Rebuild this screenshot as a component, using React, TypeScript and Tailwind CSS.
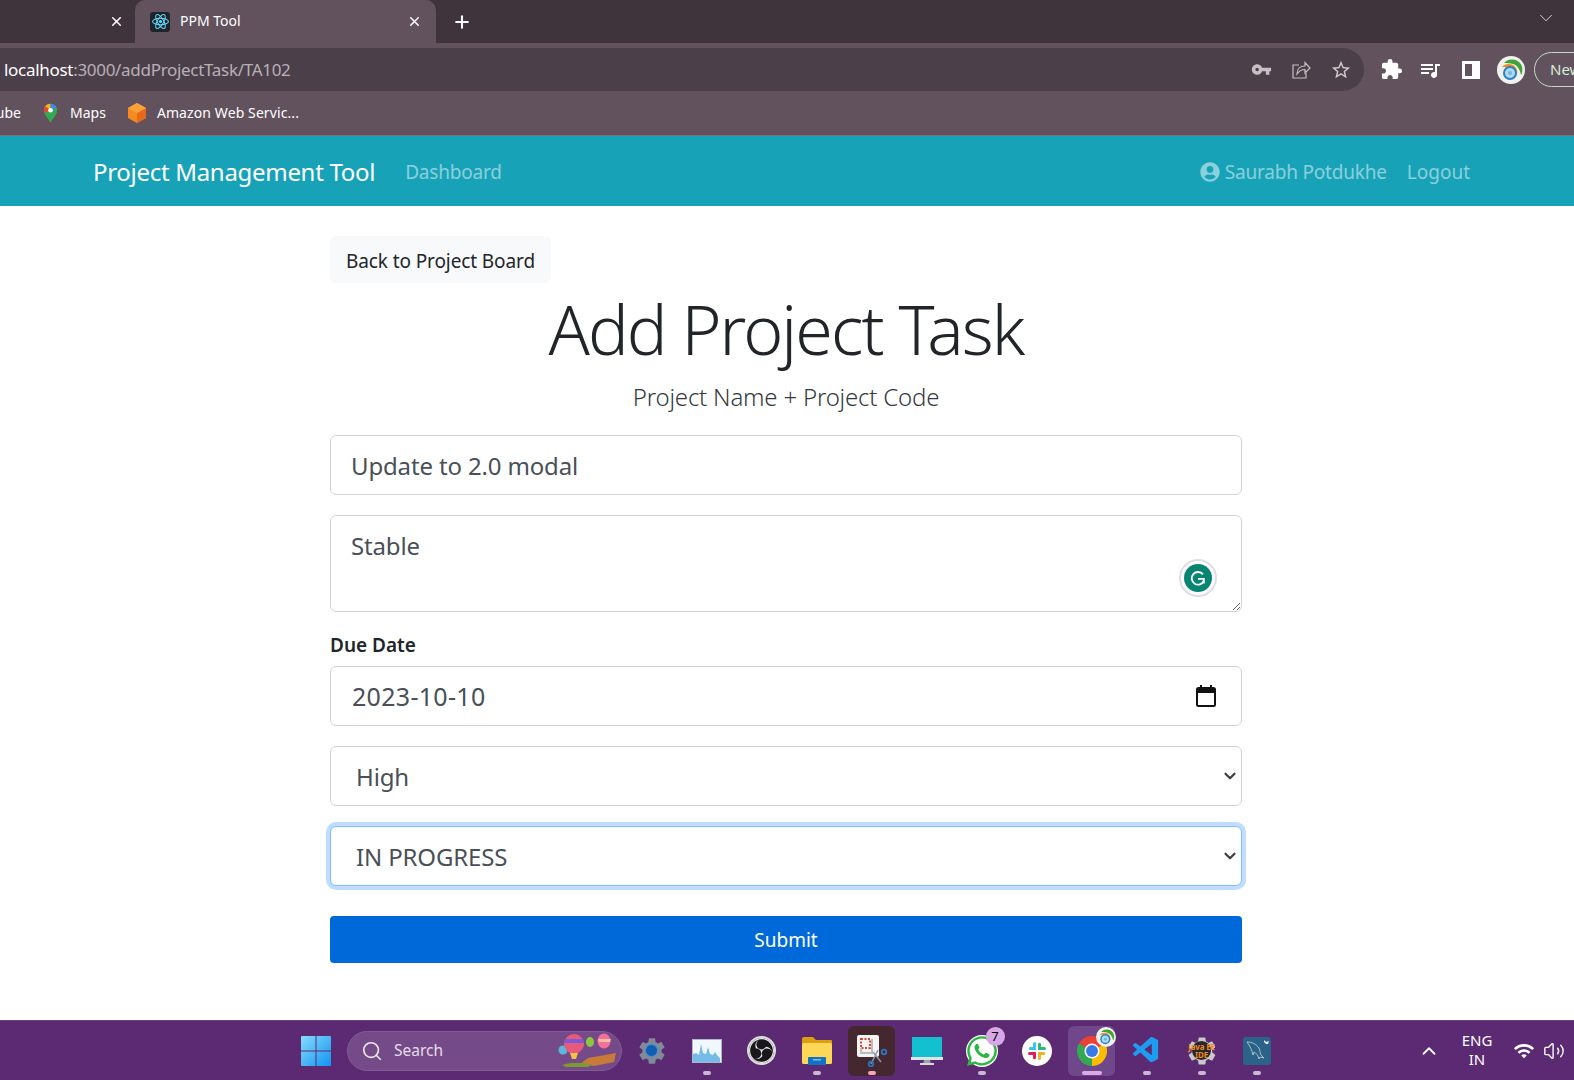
import { ChevronDown, ChevronUp, Plus, Search, Volume2, X } from 'lucide-react';
import { FaUserCircle, FaWhatsapp } from 'react-icons/fa';
import { MdExtension, MdOutlineStarBorder, MdQueueMusic, MdSettings, MdVpnKey, MdWifi } from 'react-icons/md';
import { SiObsstudio } from 'react-icons/si';
import { VscVscode } from 'react-icons/vsc';

function ReactFavicon() {
  return (
    <div className="w-[20px] h-[20px] rounded-[3px] bg-[#20232a] flex items-center justify-center">
      <svg viewBox="0 0 24 24" className="w-[19px] h-[19px]" fill="none" stroke="#61dafb" strokeWidth="1.3">
        <circle cx="12" cy="12" r="2" fill="#61dafb" stroke="none" />
        <ellipse cx="12" cy="12" rx="10" ry="4" />
        <ellipse cx="12" cy="12" rx="10" ry="4" transform="rotate(60 12 12)" />
        <ellipse cx="12" cy="12" rx="10" ry="4" transform="rotate(120 12 12)" />
      </svg>
    </div>
  );
}

function MapsPin() {
  return (
    <svg viewBox="0 0 16 22" className="w-[15px] h-[21px]">
      <path d="M8 21C6 16 1 13 1 7.5a7 7 0 0 1 14 0C15 13 10 16 8 21z" fill="#34a853" />
      <path d="M2 3.5A7 7 0 0 1 8 .5v4L4.500 9 1.500 8z" fill="#fbbc04" />
      <path d="M8 .5a7 7 0 0 1 6.500 4.500L8 7z" fill="#4285f4" />
      <path d="M2.500 3.200 8 7 3 10.500C1.500 9 1 8 1 7c0-1.300.6-2.700 1.500-3.800z" fill="#ea4335" />
      <circle cx="8" cy="7.500" r="2.500" fill="#fff" />
    </svg>
  );
}

function AwsCube() {
  return (
    <svg viewBox="0 0 20 22" className="w-[20px] h-[22px]">
      <path d="M10 1l9 5v10l-9 5-9-5V6z" fill="#f58a1f" />
      <path d="M10 11l9-5v10l-9 5z" fill="#e8681c" />
      <path d="M10 1l9 5-9 5-9-5z" fill="#f9a23c" />
    </svg>
  );
}

function ProfileLogo({ size }: { size: string }) {
  return (
    <svg viewBox="0 0 28 28" className={size}>
      <circle cx="14" cy="14" r="14" fill="#f1f1ee" />
      <path d="M7 7a11 11 0 0 1 16 0c3 3 3 9 1 12-1-6-4-10-8-11-3-1-6-1-9-1z" fill="#3fa535" />
      <path d="M5 11c2-3 7-4 11-2 3 2 5 5 4 10-1-4-3-6-6-7-3-1-6-1-9-1z" fill="#f08a24" />
      <circle cx="13" cy="17" r="7" fill="#2f7fc1" />
      <circle cx="13" cy="17" r="5" fill="#a8dcf2" />
      <circle cx="13" cy="17" r="2" fill="#6bb8e0" />
    </svg>
  );
}

function BrowserChrome() {
  return (
    <div className="shrink-0 bg-[#62525d] text-white">
      {/* tab strip */}
      <div className="h-[43px] bg-[#3f333c] flex items-start relative">
        <div className="w-[135px] h-[43px] flex items-center justify-end pr-[11px]">
          <X className="w-[15px] h-[15px]" strokeWidth={2.5} />
        </div>
        <div className="w-[301px] h-[43px] rounded-t-[10px] bg-[#62525d] flex items-center pl-[15px] pr-[14px]">
          <ReactFavicon />
          <span className="ml-[10px] mb-[2px] text-[14px] flex-1">PPM Tool</span>
          <X className="w-[15px] h-[15px]" strokeWidth={2.5} />
        </div>
        <div className="ml-[16px] h-[43px] flex items-center">
          <Plus className="w-[20px] h-[20px]" strokeWidth={2.5} />
        </div>
        <ChevronDown className="absolute right-[17px] top-[7px] w-[22px] h-[22px] text-[#e5dde3]" strokeWidth={1} />
      </div>
      {/* address row */}
      <div className="h-[48px] flex items-start pt-[5px]">
        <div className="w-[1364px] shrink-0 h-[43px] bg-[#4b3f4a] rounded-r-[22px] flex items-center pl-[4px] pr-[12px]">
          <span className="text-[17px] flex-1 tracking-[-0.3px] text-[#b9b0b7]">
            <span className="text-white">localhost</span>:3000/addProjectTask/TA102
          </span>
          <MdVpnKey className="w-[21px] h-[21px] text-[#c6c0c4]" />
          <svg viewBox="0 0 20 20" className="ml-[19px] w-[20px] h-[20px]" fill="none" stroke="#c6c0c4" strokeWidth="1.200">
            <path d="M8 5H2v13h13v-5" />
            <path d="M6 14c0-5 3-8 8-8V2.500L19 8l-5 5V9.500c-4 0-6 1.500-8 4.500z" />
          </svg>
          <MdOutlineStarBorder className="ml-[19px] w-[22px] h-[22px] text-[#d0cacd]" />
        </div>
        <div className="flex items-center shrink-0 h-[43px] ml-[16px]">
          <MdExtension className="w-[23px] h-[23px]" />
          <MdQueueMusic className="ml-[15px] w-[24px] h-[24px]" />
          <div className="ml-[20px] w-[18px] h-[18px] border-[3px] border-white border-r-[8px]" />
          <div className="ml-[17px]"><ProfileLogo size="w-[28px] h-[28px]" /></div>
          <div className="ml-[9px] h-[35px] w-[60px] shrink-0 rounded-l-[18px] border border-[#c5d8c5] pl-[15px] flex items-center text-[15px] text-[#d5ecd5] overflow-hidden">New</div>
        </div>
      </div>
      {/* bookmarks */}
      <div className="h-[44px] flex items-center text-[14px] overflow-hidden">
        <span className="w-[21px] mb-[2px] overflow-hidden flex justify-end">ube</span>
        <div className="ml-[22px]"><MapsPin /></div>
        <span className="ml-[12px] mb-[2px]">Maps</span>
        <div className="ml-[21px]"><AwsCube /></div>
        <span className="ml-[10px] mb-[2px] tracking-[0.1px]">Amazon Web Servic...</span>
      </div>
    </div>
  );
}

function NavBar() {
  return (
    <nav className="h-[71px] shrink-0 bg-[#17a2b8] flex items-center pl-[93px] pr-[104px] pt-[1px] border-t border-[#7d7079]">
      <span className="text-[24px] text-white tracking-[-0.3px]">Project Management Tool</span>
      <a className="ml-[30px] pt-[2px] text-[19px] text-white/50 tracking-[-0.2px]">Dashboard</a>
      <div className="flex-1" />
      <FaUserCircle className="w-[20px] h-[20px] text-white/50" />
      <a className="ml-[5px] pt-[2px] text-[19px] text-white/50 tracking-[-0.2px]">Saurabh Potdukhe</a>
      <a className="ml-[20px] pt-[2px] text-[19px] text-white/50">Logout</a>
    </nav>
  );
}

function DueDate() {
  return (
    <div className="h-[60px] border border-[#ced4da] rounded-[6px] flex items-center pl-[21px] pr-[25px] text-[25px] text-[#495057] tracking-[0.3px]">
      <span className="flex-1 pt-[2px]">2023-10-10</span>
      <svg viewBox="0 0 20 22" className="w-[20px] h-[22px]" fill="none" stroke="#111" strokeWidth="2">
        <rect x="1" y="3" width="18" height="18" rx="1.500" />
        <path d="M1 6h18" strokeWidth="4" />
        <path d="M5 0v3M15 0v3" />
      </svg>
    </div>
  );
}

function SelectField({ value, focused }: { value: string; focused?: boolean }) {
  return (
    <div className="relative mt-[20px]">
      <select
        className={
          focused
            ? 'block w-full appearance-none h-[60px] border border-[#80bdff] rounded-[6px] pl-[25px] pt-[2px] text-[24px] tracking-[-0.15px] text-[#495057] bg-white outline-none shadow-[0_0_0_4px_rgba(0,123,255,0.25)]'
            : 'block w-full appearance-none h-[60px] border border-[#ced4da] rounded-[6px] pl-[25px] pt-[2px] text-[24px] tracking-[-0.15px] text-[#495057] bg-white outline-none'
        }
      >
        <option>{value}</option>
      </select>
      <ChevronDown className="absolute right-[3px] top-[21px] w-[18px] h-[18px] text-[#3c4043]" strokeWidth={3} />
    </div>
  );
}

function ProjectTaskForm() {
  return (
    <main className="flex-1 overflow-hidden bg-white text-[#212529]">
      <div className="w-[912px] ml-[330px] pt-[30px]">
        <a className="inline-flex h-[47px] w-[221px] pt-[3px] items-center justify-center rounded-[6px] bg-[#f8f9fa] text-[19px] tracking-[-0.1px]">Back to Project Board</a>
        <h4 className="mt-[4px] h-[84px] leading-[84px] text-center text-[68px] font-light tracking-[-1.9px]">Add Project Task</h4>
        <p className="mt-[7px] h-[37px] leading-[38px] text-center text-[24px] font-light tracking-[-0.2px] text-[#343a40]">Project Name + Project Code</p>
        <div className="mt-[20px] flex flex-col">
          <input
            readOnly
            value="Update to 2.0 modal"
            className="h-[60px] border border-[#ced4da] rounded-[6px] px-[20px] text-[24px] tracking-[-0.15px] text-[#495057] outline-none"
          />
          <div className="relative mt-[20px] h-[97px]">
            <textarea
              readOnly
              value="Stable"
              className="block w-full h-[97px] border border-[#ced4da] rounded-[6px] px-[20px] py-[11px] text-[24px] tracking-[-0.15px] leading-[37px] text-[#495057] outline-none"
            />
            <div className="absolute right-[25px] top-[44px] w-[38px] h-[38px] rounded-full border-2 border-[#dcdfe8] bg-white flex items-center justify-center">
              <div className="w-[28px] h-[28px] rounded-full bg-[#078572] flex items-center justify-center">
                <svg viewBox="0 0 20 20" className="w-[18px] h-[18px]" fill="none" stroke="#fff" strokeWidth="2">
                  <path d="M15.500 6A7 7 0 1 0 16.500 13" />
                  <path d="M10 11h6.500v5" />
                </svg>
              </div>
            </div>
          </div>
          <label className="mt-[20px] h-[34px] leading-[26px] text-[19px] font-semibold">Due Date</label>
          <DueDate />
          <SelectField value="High" />
          <SelectField value="IN PROGRESS" focused />
          <button className="mt-[30px] h-[47px] pt-[2px] rounded-[4px] bg-[#0069d9] text-white text-[19px]">Submit</button>
        </div>
      </div>
    </main>
  );
}

function TaskIcon({ children, dot, active }: { children: React.ReactNode; dot?: string; active?: string }) {
  return (
    <div className="relative w-[55px] h-[50px] flex items-center justify-center">
      {active && <div className={`absolute inset-y-0 inset-x-[4px] rounded-[6px] ${active}`} />}
      <div className="relative">{children}</div>
      {dot && <div className={`absolute bottom-[1px] left-1/2 -translate-x-1/2 h-[4px] rounded-full ${dot}`} />}
    </div>
  );
}

function Taskbar() {
  return (
    <footer className="h-[60px] shrink-0 bg-[#5b2a72] border-t border-[#6d4283] relative flex items-center text-white">
      <svg viewBox="0 0 30 30" className="ml-[301px] w-[30px] h-[30px]">
        <defs>
          <linearGradient id="win" x1="0" y1="0" x2="1" y2="1">
            <stop offset="0" stopColor="#86dcfd" />
            <stop offset="1" stopColor="#1293f0" />
          </linearGradient>
        </defs>
        <path d="M0 1a1 1 0 0 1 1-1h13.500v14.500H0zM15.500 0H29a1 1 0 0 1 1 1v13.500H15.500zM0 15.500h14.500V30H1a1 1 0 0 1-1-1zM15.500 15.500H30V29a1 1 0 0 1-1 1H15.500z" fill="url(#win)" />
      </svg>
      <div className="ml-[16px] w-[275px] h-[40px] rounded-full bg-[#754a88] border border-[#835b95] flex items-center pl-[13px] pr-[3px]">
        <Search className="w-[22px] h-[22px] text-[#efe8f2]" strokeWidth={1.800} />
        <span className="ml-[11px] text-[15.5px] text-[#e6dcea] flex-1">Search</span>
        <svg viewBox="0 0 60 36" className="w-[60px] h-[36px]">
          <path d="M22 31l8-6 28-5-2 9-20 4z" fill="#c87a3a" />
          <path d="M4 32c8-3 20-2 30-1l-4 3H8z" fill="#7d9a2e" />
          <circle cx="5" cy="17" r="4.500" fill="#58b8e0" />
          <path d="M6 11a10 10 0 0 1 20 0c0 4-3 7-6 9h-8c-3-2-6-5-6-9z" fill="#e85a7a" />
          <path d="M7 6h18l1 4H6z" fill="#7a5ad8" />
          <path d="M12 20h8l-2 6h-4z" fill="#f5c142" />
          <ellipse cx="32" cy="9" rx="4" ry="5" fill="#8ec63f" />
          <ellipse cx="46" cy="8" rx="6.500" ry="7.500" fill="#f2709c" />
          <path d="M40 6h13l-1 3H41z" fill="#f9c0a0" />
        </svg>
      </div>
      <div className="ml-[2px] flex items-center">
        <TaskIcon>
          <div className="relative w-[32px] h-[32px] flex items-center justify-center">
            <MdSettings className="w-[38px] h-[38px] text-[#7f8b99]" />
            <div className="absolute w-[13px] h-[13px] rounded-full bg-[#0f5fb5] border border-[#4d8fd4]" />
          </div>
        </TaskIcon>
        <TaskIcon dot="w-[8px] bg-[#c9b8d2]">
          <svg viewBox="0 0 30 24" className="w-[30px] h-[24px]">
            <rect width="30" height="24" fill="#a9b9c6" />
            <rect x="1" y="1" width="28" height="22" fill="#f1f8fd" />
            <path d="M1 23V15l3-1 3 2 2-11 2 9 3 1 2-7 2 7 3 1 2-3 2 3 3 3v4z" fill="#74bbe8" />
          </svg>
        </TaskIcon>
        <TaskIcon>
          <div className="w-[29px] h-[29px] rounded-full bg-[#19171c] border-2 border-[#dcdcdc] flex items-center justify-center">
            <SiObsstudio className="w-[25px] h-[25px] text-[#e8e8e8]" />
          </div>
        </TaskIcon>
        <TaskIcon dot="w-[8px] bg-[#c9b8d2]">
          <svg viewBox="0 0 30 28" className="w-[30px] h-[28px]">
            <path d="M0 2a2 2 0 0 1 2-2h9l3 3h15a1 1 0 0 1 1 1v3H0z" fill="#dd9f0d" />
            <rect x="0" y="6" width="30" height="21" rx="1.500" fill="#fdd858" />
            <rect x="6" y="20" width="18" height="8" rx="1" fill="#1272c4" />
            <rect x="11" y="22" width="8" height="1.500" fill="#fff" opacity="0.500" />
          </svg>
        </TaskIcon>
        <TaskIcon dot="w-[8px] bg-[#f0a6b8]" active="bg-[#45282f]">
          <svg viewBox="0 0 32 32" className="w-[32px] h-[32px]">
            <rect x="1" y="0" width="22" height="22" rx="2" fill="#f4f4f4" />
            <rect x="5" y="4" width="9" height="9" fill="none" stroke="#d9452e" strokeWidth="2" strokeDasharray="2 1.500" />
            <path d="M5 13v5h11V4" fill="none" stroke="#bdbdbd" strokeWidth="2" />
            <path d="M15 29L22 15M17 17l8 10" stroke="#8a9aa8" strokeWidth="1.500" fill="none" />
            <circle cx="15" cy="29" r="2.300" fill="none" stroke="#2a78c5" strokeWidth="1.700" />
            <circle cx="28" cy="17" r="2.300" fill="none" stroke="#2a78c5" strokeWidth="1.700" />
          </svg>
        </TaskIcon>
        <TaskIcon>
          <svg viewBox="0 0 32 30" className="w-[32px] h-[30px]">
            <rect x="1" y="1" width="30" height="20" fill="#12c0d0" />
            <rect x="0" y="21" width="32" height="3" fill="#e2e2e2" />
            <path d="M13 24h6l1 4h-8z" fill="#9aa3a8" />
            <rect x="9" y="27" width="14" height="2" fill="#d8d8d8" />
          </svg>
        </TaskIcon>
        <TaskIcon dot="w-[8px] bg-[#c9b8d2]">
          <div className="relative w-[32px] h-[32px] rounded-full bg-white flex items-center justify-center">
            <FaWhatsapp className="w-[34px] h-[34px] text-[#2bb741]" />
            <div className="absolute -top-[8px] -right-[7px] w-[19px] h-[19px] rounded-full bg-[#d8a8e6] text-black text-[13px] leading-[19px] text-center">7</div>
          </div>
        </TaskIcon>
        <TaskIcon>
          <div className="w-[30px] h-[30px] rounded-full bg-white flex items-center justify-center">
            <svg viewBox="0 0 24 24" className="w-[20px] h-[20px]" strokeWidth="3.600" strokeLinecap="round" fill="none">
              <path d="M9 3v6H4" stroke="#36c5f0" />
              <path d="M21 9h-6V4" stroke="#2eb67d" />
              <path d="M15 21v-6h5" stroke="#ecb22e" />
              <path d="M3 15h6v5" stroke="#e01e5a" />
            </svg>
          </div>
        </TaskIcon>
        <TaskIcon dot="w-[20px] bg-[#dba9e8]" active="bg-[#70478a]">
          <div className="relative w-[30px] h-[30px]">
            <svg viewBox="0 0 30 30" className="w-[30px] h-[30px]">
              <path d="M15 15L2 7.500A15 15 0 0 1 28 7.500z" fill="#ea4335" />
              <path d="M15 15L28 7.500A15 15 0 0 1 15 30z" fill="#fbbc04" />
              <path d="M15 15L15 30A15 15 0 0 1 2 7.500z" fill="#34a853" />
              <circle cx="15" cy="15" r="7.500" fill="#fff" />
              <circle cx="15" cy="15" r="6" fill="#3b78e7" />
            </svg>
            <div className="absolute -top-[9px] -right-[9px] rounded-full"><ProfileLogo size="w-[20px] h-[20px]" /></div>
          </div>
        </TaskIcon>
        <TaskIcon dot="w-[8px] bg-[#c9b8d2]">
          <VscVscode className="w-[31px] h-[31px] text-[#1f9cf0]" />
        </TaskIcon>
        <TaskIcon dot="w-[8px] bg-[#c9b8d2]">
          <div className="relative w-[30px] h-[30px] flex items-center justify-center">
            <MdSettings className="absolute -inset-[2px] w-[34px] h-[34px] text-[#c9c9c9]" />
            <div className="relative w-[19px] h-[19px] rounded-full bg-[#26262c]" />
            <div className="absolute inset-0 flex flex-col items-center justify-center text-[#f08a24] text-[8px] leading-[8px] font-bold whitespace-nowrap tracking-[-0.2px]">
              <span>Java EE</span>
              <span>IDE</span>
            </div>
          </div>
        </TaskIcon>
        <TaskIcon dot="w-[8px] bg-[#c9b8d2]">
          <svg viewBox="0 0 28 28" className="w-[28px] h-[28px]">
            <rect width="28" height="28" rx="3" fill="#2a6288" />
            <path d="M4 5c5 0 9 2 12 6 1 2 1 5 2 7l3 3-4-1-1 2c-1-4-3-6-5-7l-1 3C9 13 7 9 4 5z" fill="none" stroke="#c6d6e0" strokeWidth="0.800" />
            <path d="M21 3l2 2 3-1-1 3-2 0-2-2z" fill="#e8eef2" />
          </svg>
        </TaskIcon>
      </div>
      <div className="flex-1" />
      <ChevronUp className="w-[22px] h-[22px]" strokeWidth={2} />
      <div className="ml-[21px] w-[32px] pb-[2px] text-[15px] leading-[19px] text-center">ENG<br />IN</div>
      <MdWifi className="ml-[20px] w-[22px] h-[22px]" />
      <Volume2 className="ml-[8px] mr-[9px] w-[22px] h-[22px]" strokeWidth={1.500} />
    </footer>
  );
}

export default function App() {
  return (
    <div className="h-screen flex flex-col overflow-hidden font-['Noto_Sans',sans-serif]">
      <BrowserChrome />
      <NavBar />
      <ProjectTaskForm />
      <Taskbar />
    </div>
  );
}
